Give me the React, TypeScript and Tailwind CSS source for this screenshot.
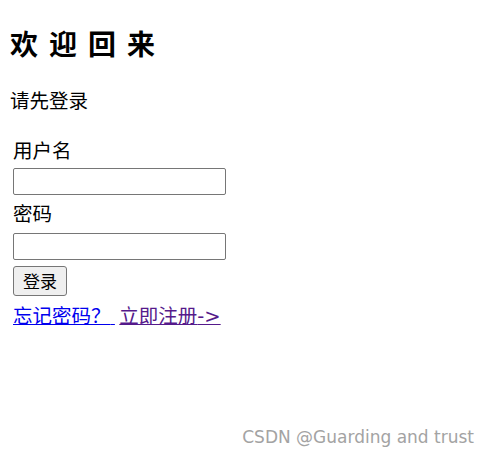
export default function App() {
  return (
    <main
      className="relative w-[490px] h-[456px] bg-white text-black"
      style={{ fontFamily: '"Noto Sans CJK SC", "Liberation Sans", sans-serif' }}
    >
      <div className="pt-[25px] pl-[10px]">
        {/* Title */}
        <h1 className="text-[28px] leading-[36px] font-bold tracking-[11px]">欢迎回来</h1>
        <p className="mt-[26px] text-[19.5px] leading-[26px]">请先登录</p>

        {/* Login form */}
        <form className="mt-[24px] pl-[3px] flex flex-col items-start">
          <label className="text-[19.5px] leading-[26px]">用户名</label>
          <input
            type="text"
            className="mt-[5px] w-[213px] h-[27px] border border-[#767676] rounded-[2px] bg-white"
          />
          <label className="mt-[5px] text-[19.5px] leading-[26px]">密码</label>
          <input
            type="password"
            className="mt-[7px] w-[213px] h-[27px] border border-[#767676] rounded-[2px] bg-white"
          />
          <button
            type="button"
            className="mt-[6px] w-[54px] h-[30px] border border-[#767676] rounded-[3px] bg-[#efefef] text-[17px] leading-[24px]"
          >
            登录
          </button>
          <div className="mt-[6px] text-[19.5px] leading-[26px] whitespace-pre">
            <a href="#" className="text-[#0000ee] underline">
              忘记密码？{" "}
            </a>{" "}
            <a href="#" className="text-[#551a8b] underline">
              立即注册
              <span style={{ fontFamily: '"DejaVu Sans", sans-serif' }}>-&gt;</span>
            </a>
          </div>
        </form>
      </div>

      {/* Watermark */}
      <div
        className="absolute right-[16px] top-[425px] text-[17px] leading-[24px] text-[#a3a3a3]"
        style={{ fontFamily: '"DejaVu Sans", sans-serif' }}
      >
        CSDN @Guarding and trust
      </div>
    </main>
  );
}
